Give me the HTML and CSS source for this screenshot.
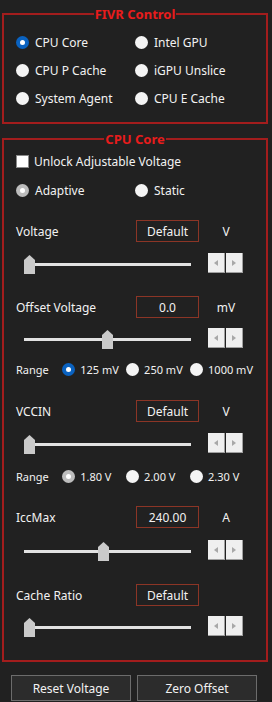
FILE: index.html
```html
<!DOCTYPE html>
<html lang="en">
<head>
  <meta charset="UTF-8">
  <title>FIVR Control</title>
  <link rel="stylesheet" href="styles.css">
</head>
<body>

  <fieldset class="group fivr">
    <legend>FIVR Control</legend>
    <div class="opt-grid">
      <div class="opt"><span class="radio on"></span>CPU Core</div>
      <div class="opt"><span class="radio"></span>Intel GPU</div>
      <div class="opt"><span class="radio"></span>CPU P Cache</div>
      <div class="opt"><span class="radio"></span>iGPU Unslice</div>
      <div class="opt"><span class="radio"></span>System Agent</div>
      <div class="opt"><span class="radio"></span>CPU E Cache</div>
    </div>
  </fieldset>

  <fieldset class="group core">
    <legend>CPU Core</legend>

    <div class="opt check-row"><span class="check"></span>Unlock Adjustable Voltage</div>

    <div class="opt-grid mode-row">
      <div class="opt"><span class="radio dim"></span>Adaptive</div>
      <div class="opt"><span class="radio"></span>Static</div>
    </div>

    <div class="value-row r-volt">
      <span class="label">Voltage</span>
      <span class="box">Default</span>
      <span class="unit">V</span>
    </div>
    <div class="slider-row s-volt">
      <div class="track"><span class="thumb" style="left:0px"></span></div>
      <div class="spin"><span class="sbtn left"></span><span class="sbtn right"></span></div>
    </div>

    <div class="value-row r-offset">
      <span class="label">Offset Voltage</span>
      <span class="box">0.0</span>
      <span class="unit">mV</span>
    </div>
    <div class="slider-row s-offset">
      <div class="track"><span class="thumb" style="left:78px"></span></div>
      <div class="spin"><span class="sbtn left"></span><span class="sbtn right"></span></div>
    </div>
    <div class="range-row rg-offset">
      <span class="range-label">Range</span>
      <div class="opt small"><span class="radio on"></span>125 mV</div>
      <div class="opt small"><span class="radio"></span>250 mV</div>
      <div class="opt small"><span class="radio"></span>1000 mV</div>
    </div>

    <div class="value-row r-vccin">
      <span class="label">VCCIN</span>
      <span class="box">Default</span>
      <span class="unit">V</span>
    </div>
    <div class="slider-row s-vccin">
      <div class="track"><span class="thumb" style="left:0px"></span></div>
      <div class="spin"><span class="sbtn left"></span><span class="sbtn right"></span></div>
    </div>
    <div class="range-row rg-vccin">
      <span class="range-label">Range</span>
      <div class="opt small"><span class="radio dim"></span>1.80 V</div>
      <div class="opt small"><span class="radio"></span>2.00 V</div>
      <div class="opt small"><span class="radio"></span>2.30 V</div>
    </div>

    <div class="value-row r-icc">
      <span class="label">IccMax</span>
      <span class="box">240.00</span>
      <span class="unit">A</span>
    </div>
    <div class="slider-row s-icc">
      <div class="track"><span class="thumb" style="left:74px"></span></div>
      <div class="spin"><span class="sbtn left"></span><span class="sbtn right"></span></div>
    </div>

    <div class="value-row r-cache">
      <span class="label">Cache Ratio</span>
      <span class="box">Default</span>
      <span class="unit"></span>
    </div>
    <div class="slider-row s-cache">
      <div class="track"><span class="thumb" style="left:0px"></span></div>
      <div class="spin"><span class="sbtn left"></span><span class="sbtn right"></span></div>
    </div>
  </fieldset>

  <div class="actions">
    <button class="act">Reset Voltage</button>
    <button class="act">Zero Offset</button>
  </div>

</body>
</html>
```

FILE: styles.css
```css
* { box-sizing: border-box; }

body {
  margin: 0;
  width: 272px;
  height: 702px;
  background: #212121;
  color: #f2f2f2;
  font-family: 'Noto Sans', sans-serif;
  font-size: 12px;
  overflow: hidden;
}

.group {
  min-width: 0;
  margin: 0 4px 0 2px;
  border: 2px solid #a31d1d;
  padding: 0 12px;
}

.group legend {
  margin: 0 auto;
  padding: 0 1px;
  color: #e81c1c;
  font-weight: bold;
  font-size: 13px;
  line-height: 16px;
}

.fivr { margin-top: 6px; padding-bottom: 16px; }
.core { margin-top: 7px; padding-bottom: 21px; }

.opt-grid {
  display: grid;
  grid-template-columns: 119px 1fr;
  row-gap: 12px;
}

.fivr .opt-grid { margin-top: 12px; }

.opt {
  display: flex;
  align-items: center;
  height: 16px;
  white-space: nowrap;
}

.radio {
  width: 13px;
  height: 13px;
  border-radius: 50%;
  background: #f4f4f4;
  margin-right: 6px;
  flex: none;
  display: flex;
  align-items: center;
  justify-content: center;
}

.radio.on { background: #0a62c0; }
.radio.dim { background: #bdbdbd; }

.radio.on::after,
.radio.dim::after {
  content: "";
  width: 5px;
  height: 5px;
  border-radius: 50%;
  background: #fff;
}

.check {
  width: 13px;
  height: 13px;
  background: #fff;
  border: 1px solid #8a8a8a;
  margin-right: 5px;
  flex: none;
}

.check-row { margin-top: 6px; }
.mode-row { margin-top: 13px; }

.value-row {
  display: flex;
  align-items: center;
  height: 22px;
}

.label { width: 120px; }

.box {
  width: 63px;
  height: 22px;
  border: 1px solid #8c3526;
  display: flex;
  align-items: center;
  justify-content: center;
}

.unit {
  width: 40px;
  margin-left: 7px;
  text-align: center;
}

.slider-row {
  display: flex;
  height: 22px;
}

.track {
  position: relative;
  width: 167px;
  height: 22px;
  margin-left: 8px;
}

.track::before {
  content: "";
  position: absolute;
  left: 0;
  right: 0;
  top: 9px;
  height: 3px;
  background: #e2e2e2;
}

.thumb {
  position: absolute;
  top: 1px;
  width: 11px;
  height: 19px;
  background: #cacaca;
  clip-path: polygon(0 5px, 5.5px 0, 11px 5px, 11px 19px, 0 19px);
}

.spin {
  display: flex;
  gap: 1px;
  margin-left: 17px;
  margin-top: -1px;
  width: 35px;
  height: 20px;
}

.sbtn {
  width: 17px;
  height: 20px;
  background: #efefef;
  border-right: 1px solid #a0a0a0;
  border-bottom: 1px solid #a0a0a0;
  display: flex;
  align-items: center;
  justify-content: center;
}

.sbtn::after {
  content: "";
  width: 0;
  height: 0;
  border-top: 3.5px solid transparent;
  border-bottom: 3.5px solid transparent;
}

.sbtn.left::after { border-right: 4px solid #a8a8a8; }
.sbtn.right::after { border-left: 4px solid #a8a8a8; }

.range-row {
  display: flex;
  align-items: center;
  height: 16px;
  font-size: 11px;
}

.range-label { width: 48px; }
.range-row .opt { width: 66.5px; }
.range-row .radio { margin-right: 5px; }

.r-volt { margin-top: 22px; }
.s-volt { margin-top: 12px; }
.r-offset { margin-top: 20px; }
.s-offset { margin-top: 11px; }
.rg-offset { margin-top: 10px; }
.r-vccin { margin-top: 23px; }
.s-vccin { margin-top: 12px; }
.rg-vccin { margin-top: 12px; }
.r-icc { margin-top: 22px; }
.s-icc { margin-top: 13px; }
.r-cache { margin-top: 21px; }
.s-cache { margin-top: 11px; }

.actions {
  display: flex;
  gap: 6px;
  margin-top: 13px;
  padding-left: 11px;
}

.act {
  width: 120px;
  height: 26px;
  background: #2c2c2c;
  border: 1px solid #6c6c6c;
  color: #f2f2f2;
  font-family: 'Noto Sans', sans-serif;
  font-size: 12px;
  padding: 0;
}
```
